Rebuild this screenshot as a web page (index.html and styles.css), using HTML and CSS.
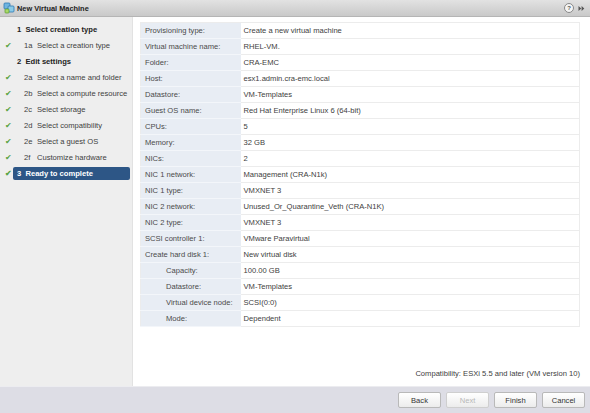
FILE: index.html
```html
<!DOCTYPE html>
<html lang="en">
  <head>
    <meta charset="UTF-8" />
    <title>New Virtual Machine</title>
    <link rel="stylesheet" href="styles.css">
  </head>
  <body>
    <div class="wizard">
      <div class="titlebar">
        <svg class="title-icon" width="12" height="12" viewBox="0 0 12 12">
          <rect x="1" y="1" width="6" height="6" rx="1" fill="#6fb4e0" stroke="#2f79b3" stroke-width="0.8"/>
          <rect x="5" y="4" width="6" height="6" rx="1" fill="#8ccbe8" stroke="#2f79b3" stroke-width="0.8"/>
          <rect x="2" y="7" width="4" height="4" rx="0.8" fill="#a9d96a" stroke="#5a9a2a" stroke-width="0.7"/>
        </svg>
        <span class="title">New Virtual Machine</span>
        <div class="title-tools">
          <span class="help">?</span>
          <svg width="7" height="7" viewBox="0 0 7 7">
            <path d="M0.5 1 L3.2 3.5 L0.5 6 Z M3.6 1 L6.3 3.5 L3.6 6 Z" fill="#555"/>
          </svg>
        </div>
      </div>

      <div class="body">
        <div class="nav">
          <div class="step head"><span class="check"></span>1&nbsp; Select creation type</div>
          <div class="step sub"><span class="check">&#10004;</span><span class="num">1a</span>Select a creation type</div>
          <div class="step head"><span class="check"></span>2&nbsp; Edit settings</div>
          <div class="step sub"><span class="check">&#10004;</span><span class="num">2a</span>Select a name and folder</div>
          <div class="step sub"><span class="check">&#10004;</span><span class="num">2b</span>Select a compute resource</div>
          <div class="step sub"><span class="check">&#10004;</span><span class="num">2c</span>Select storage</div>
          <div class="step sub"><span class="check">&#10004;</span><span class="num">2d</span>Select compatibility</div>
          <div class="step sub"><span class="check">&#10004;</span><span class="num">2e</span>Select a guest OS</div>
          <div class="step sub"><span class="check">&#10004;</span><span class="num">2f</span>Customize hardware</div>
          <div class="step head current"><span class="check">&#10004;</span><span class="pill">3&nbsp; Ready to complete</span></div>
        </div>

        <div class="main">
          <table class="summary">
            <tr><td class="label">Provisioning type:</td><td>Create a new virtual machine</td></tr>
            <tr><td class="label">Virtual machine name:</td><td>RHEL-VM.</td></tr>
            <tr><td class="label">Folder:</td><td>CRA-EMC</td></tr>
            <tr><td class="label">Host:</td><td>esx1.admin.cra-emc.local</td></tr>
            <tr><td class="label">Datastore:</td><td>VM-Templates</td></tr>
            <tr><td class="label">Guest OS name:</td><td>Red Hat Enterprise Linux 6 (64-bit)</td></tr>
            <tr><td class="label">CPUs:</td><td>5</td></tr>
            <tr><td class="label">Memory:</td><td>32 GB</td></tr>
            <tr><td class="label">NICs:</td><td>2</td></tr>
            <tr><td class="label">NIC 1 network:</td><td>Management (CRA-N1k)</td></tr>
            <tr><td class="label">NIC 1 type:</td><td>VMXNET 3</td></tr>
            <tr><td class="label">NIC 2 network:</td><td>Unused_Or_Quarantine_Veth (CRA-N1K)</td></tr>
            <tr><td class="label">NIC 2 type:</td><td>VMXNET 3</td></tr>
            <tr><td class="label">SCSI controller 1:</td><td>VMware Paravirtual</td></tr>
            <tr><td class="label">Create hard disk 1:</td><td>New virtual disk</td></tr>
            <tr><td class="label indent">Capacity:</td><td>100.00 GB</td></tr>
            <tr><td class="label indent">Datastore:</td><td>VM-Templates</td></tr>
            <tr><td class="label indent">Virtual device node:</td><td>SCSI(0:0)</td></tr>
            <tr><td class="label indent">Mode:</td><td>Dependent</td></tr>
          </table>
          <div class="compat">Compatibility: ESXi 5.5 and later (VM version 10)</div>
        </div>
      </div>

      <div class="footer">
        <button class="btn">Back</button>
        <button class="btn" disabled>Next</button>
        <button class="btn">Finish</button>
        <button class="btn">Cancel</button>
      </div>
    </div>
  </body>
</html>
```

FILE: styles.css
```css
/* wizard dialog */
body {
  margin: 0;
  font-family: "Liberation Sans", Arial, sans-serif;
  font-size: 7.6px;
  color: #404040;
}
.wizard {
  display: flex;
  flex-direction: column;
  width: 590px;
  height: 413px;
  overflow: hidden;
}
.titlebar {
  display: flex;
  align-items: center;
  height: 17px;
  padding: 0 3px;
  background: linear-gradient(#e2e2e2, #c9c9c9);
  border-bottom: 1px solid #b5b5b5;
  box-sizing: border-box;
}
.title-icon {
  margin-right: 2px;
}
.title {
  font-weight: bold;
  color: #222;
  font-size: 7.4px;
}
.title-tools {
  margin-left: auto;
  display: flex;
  align-items: center;
  gap: 4px;
  padding-right: 2px;
}
.help {
  width: 8px;
  height: 8px;
  border-radius: 50%;
  border: 1px solid #888;
  background: #f4f4f4;
  font-size: 6px;
  font-weight: bold;
  color: #555;
  display: flex;
  align-items: center;
  justify-content: center;
}

.body {
  flex: 1;
  display: flex;
  min-height: 0;
}
.nav {
  width: 133px;
  background: #eeeeee;
  border-right: 1px solid #e2e2e2;
  padding-top: 4px;
  box-sizing: border-box;
}
.step {
  display: flex;
  align-items: center;
  height: 16px;
  white-space: nowrap;
}
.check {
  width: 12px;
  padding-left: 5px;
  color: #5aa444;
  font-size: 7.5px;
}
.head {
  font-weight: bold;
  color: #222;
}
.sub .check {
  width: 19px;
}
.num {
  width: 13px;
}
.pill {
  background: #2d5686;
  color: #fff;
  border-radius: 2px;
  width: 117px;
  height: 13px;
  line-height: 13px;
  padding-left: 4px;
  margin-left: -4px;
  box-sizing: border-box;
}

.main {
  flex: 1;
  display: flex;
  flex-direction: column;
  padding: 5px 9px 8px 7px;
  background: #fff;
}
.summary {
  border-collapse: collapse;
  width: 440px;
  border: 1px solid #ececec;
}
.summary td {
  height: 16px;
  padding: 0 3px;
  border-bottom: 1px solid #ececec;
  box-sizing: border-box;
  white-space: nowrap;
}
.summary td.label {
  width: 100px;
  padding-left: 4px;
  background: #e8edf4;
  border-bottom-color: #f3f6fa;
  color: #4a4a4a;
}
.summary td.indent {
  padding-left: 25px;
}
.compat {
  margin-top: auto;
  text-align: right;
  padding-right: 1px;
}

.footer {
  height: 27px;
  display: flex;
  align-items: center;
  justify-content: flex-end;
  gap: 5px;
  padding-right: 5px;
  background: #dddde5;
  border-top: 1px solid #ececf0;
  box-sizing: border-box;
}
.btn {
  width: 43px;
  height: 16px;
  padding: 0;
  font-family: inherit;
  font-size: 7.6px;
  color: #333;
  background: linear-gradient(#ffffff, #ececec);
  border: 1px solid #b9b9b9;
  border-radius: 2px;
}
.btn:disabled {
  color: #b8b8b8;
  border-color: #cfcfcf;
}
```
